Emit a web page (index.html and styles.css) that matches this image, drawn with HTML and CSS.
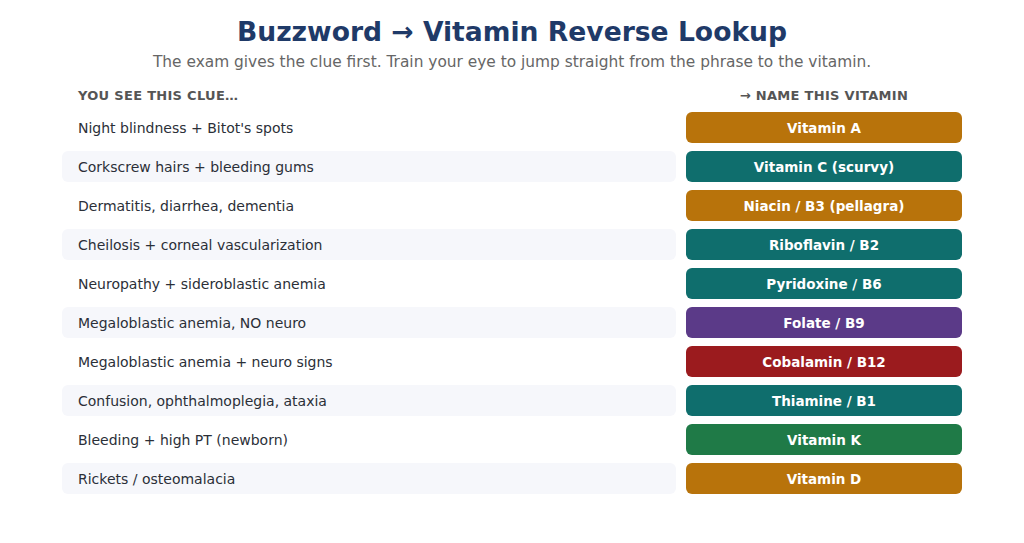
FILE: index.html
```html
<!DOCTYPE html>
<html lang="en">
<head>
<meta charset="utf-8">
<title>Buzzword → Vitamin Reverse Lookup</title>
<link rel="stylesheet" href="styles.css">
</head>
<body>
<main class="page">
  <h1 class="title">Buzzword → Vitamin Reverse Lookup</h1>
  <p class="subtitle">The exam gives the clue first. Train your eye to jump straight from the phrase to the vitamin.</p>
  <div class="table">
    <div class="head clue-head">YOU SEE THIS CLUE…</div>
    <div class="head vit-head">→ NAME THIS VITAMIN</div>

    <div class="clue">Night blindness + Bitot's spots</div>
    <div class="vit amber">Vitamin A</div>

    <div class="clue alt">Corkscrew hairs + bleeding gums</div>
    <div class="vit teal">Vitamin C (scurvy)</div>

    <div class="clue">Dermatitis, diarrhea, dementia</div>
    <div class="vit amber">Niacin / B3 (pellagra)</div>

    <div class="clue alt">Cheilosis + corneal vascularization</div>
    <div class="vit teal">Riboflavin / B2</div>

    <div class="clue">Neuropathy + sideroblastic anemia</div>
    <div class="vit teal">Pyridoxine / B6</div>

    <div class="clue alt">Megaloblastic anemia, NO neuro</div>
    <div class="vit purple">Folate / B9</div>

    <div class="clue">Megaloblastic anemia + neuro signs</div>
    <div class="vit red">Cobalamin / B12</div>

    <div class="clue alt">Confusion, ophthalmoplegia, ataxia</div>
    <div class="vit teal">Thiamine / B1</div>

    <div class="clue">Bleeding + high PT (newborn)</div>
    <div class="vit green">Vitamin K</div>

    <div class="clue alt">Rickets / osteomalacia</div>
    <div class="vit amber">Vitamin D</div>
  </div>
</main>
</body>
</html>
```

FILE: styles.css
```css
html, body {
  margin: 0;
  padding: 0;
  background: #ffffff;
}
body {
  font-family: "DejaVu Sans", "Noto Sans", sans-serif;
  color: #2b2f38;
}
.page {
  width: 900px;
  margin: 0 auto;
  padding-top: 16px;
}
.title {
  margin: 0;
  text-align: center;
  font-size: 26.6px;
  line-height: 32px;
  font-weight: bold;
  color: #1f3a68;
}
.subtitle {
  margin: 4px 0 0;
  text-align: center;
  font-size: 15.4px;
  line-height: 20px;
  color: #666666;
}
.table {
  margin-top: 15px;
  display: grid;
  grid-template-columns: 614px 276px;
  column-gap: 10px;
  row-gap: 8px;
}
.head {
  font-size: 13px;
  font-weight: bold;
  color: #555555;
  line-height: 17px;
  letter-spacing: 0.3px;
}
.clue-head {
  padding-left: 16px;
}
.vit-head {
  text-align: center;
}
.clue {
  height: 31px;
  display: flex;
  align-items: center;
  padding-left: 16px;
  font-size: 14px;
  border-radius: 6px;
  color: #2b2f38;
}
.clue.alt {
  background: #f6f7fb;
}
.vit {
  height: 31px;
  display: flex;
  align-items: center;
  justify-content: center;
  border-radius: 6px;
  color: #ffffff;
  font-size: 13.5px;
  font-weight: bold;
}
.amber { background: #b8730b; }
.teal { background: #0f6e6d; }
.purple { background: #5b3a88; }
.red { background: #9b1b1e; }
.green { background: #1f7a47; }
```
